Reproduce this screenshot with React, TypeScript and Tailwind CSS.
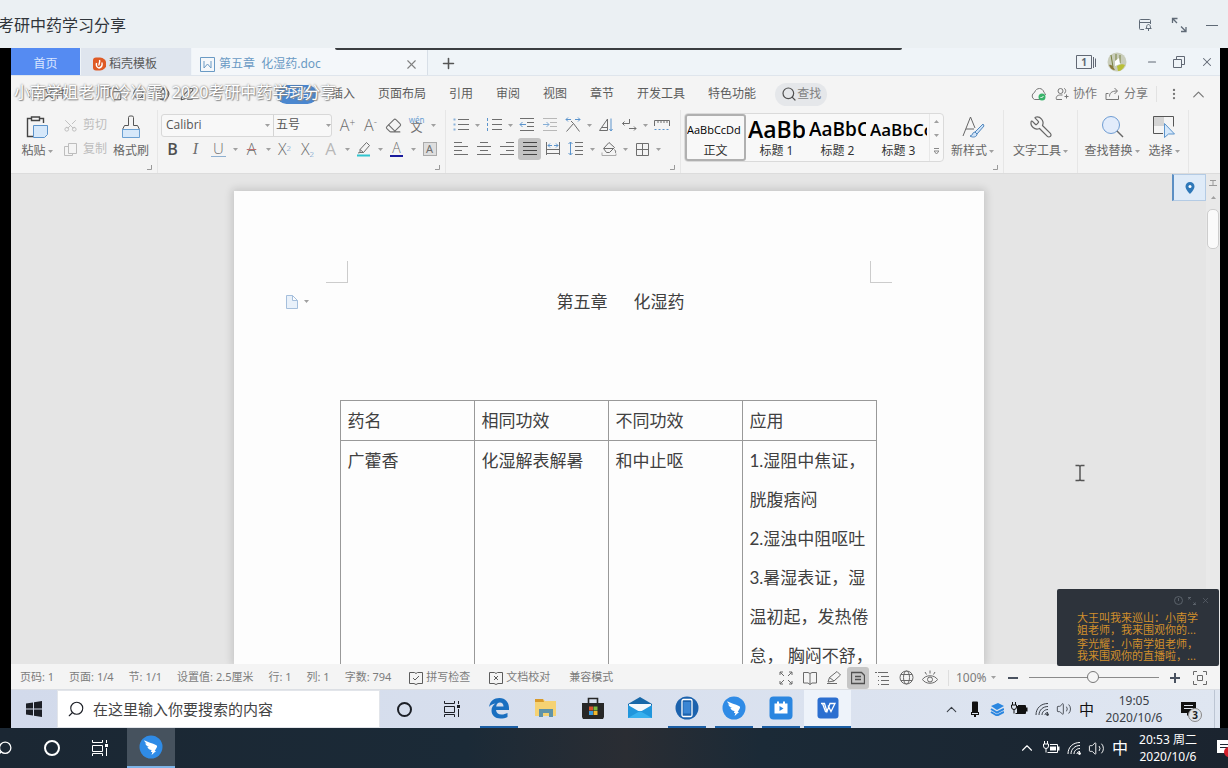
import { useState, type ReactNode } from "react";
import {
  ChevronUp,
  Copy,
  Eraser,
  Globe,
  List,
  Minus,
  MoreVertical,
  PenLine,
  Plus,
  Scissors,
  Search,
  Volume2,
  Wrench,
  X,
} from "lucide-react";

const MENUS = ["插入", "页面布局", "引用", "审阅", "视图", "章节", "开发工具", "特色功能"];

const STYLES = [
  { name: "正文", sample: "AaBbCcDd", cls: "text-[11px]" },
  { name: "标题 1", sample: "AaBb", cls: "text-[23px] font-semibold" },
  { name: "标题 2", sample: "AaBbC", cls: "text-[19px] font-semibold" },
  { name: "标题 3", sample: "AaBbCc", cls: "text-[17px] font-semibold" },
];

const USAGE_LINES = [
  "1.湿阻中焦证，",
  "胱腹痞闷",
  "2.湿浊中阻呕吐",
  "3.暑湿表证，湿",
  "温初起，发热倦",
  "怠， 胸闷不舒，",
];

function Svg({
  w = 16,
  h = 16,
  box,
  className = "",
  children,
}: {
  w?: number;
  h?: number;
  box?: string;
  className?: string;
  children: ReactNode;
}) {
  return (
    <svg
      width={w}
      height={h}
      viewBox={box ?? `0 0 ${w} ${h}`}
      fill="none"
      stroke="currentColor"
      strokeWidth={1}
      className={`shrink-0 ${className}`}
      aria-hidden="true"
    >
      {children}
    </svg>
  );
}

function Caret() {
  return (
    <Svg w={5} h={3} className="text-[#a0a0a0]">
      <path d="M0 0h5L2.5 3z" fill="currentColor" stroke="none" />
    </Svg>
  );
}

// Small ribbon button, optionally with its drop-down arrow
function Tool({
  label,
  caret,
  active,
  dim,
  children,
}: {
  label: string;
  caret?: boolean;
  active?: boolean;
  dim?: boolean;
  children: ReactNode;
}) {
  return (
    <button
      type="button"
      aria-label={label}
      className={`flex h-6 items-center ${dim ? "text-[#b8b8b8]" : "text-[#6e6e6e]"}`}
    >
      <span
        className={`flex h-[22px] w-[23px] items-center justify-center rounded-[3px] ${
          active ? "bg-[#c3c3c3] text-[#444]" : ""
        }`}
      >
        {children}
      </span>
      {caret && (
        <span className="flex w-[10px] justify-center">
          <Caret />
        </span>
      )}
    </button>
  );
}

// Large ribbon button: icon on top, caption below
function BigTool({
  label,
  caret,
  className,
  children,
}: {
  label: string;
  caret?: boolean;
  className: string;
  children: ReactNode;
}) {
  return (
    <button
      type="button"
      className={`flex shrink-0 flex-col items-center gap-1 pt-[2px] text-[#666] ${className}`}
    >
      <span className="flex h-6 items-center">{children}</span>
      <span className="flex items-center gap-[2px] whitespace-nowrap text-[12px] leading-4">
        {label}
        {caret && <Caret />}
      </span>
    </button>
  );
}

function Launcher() {
  return (
    <Svg w={5} h={5} className="absolute right-[5px] bottom-[3px] text-[#999]">
      <path d="M4.5 0v4.5H0" />
    </Svg>
  );
}

function Lines({ rows }: { rows: [number, number][] }) {
  return (
    <Svg>
      {rows.map(([a, b], i) => (
        <path key={i} d={`M${a} ${1.5 + i * 4}H${b}`} />
      ))}
    </Svg>
  );
}

function DingTalk({ size = 24 }: { size?: number }) {
  return (
    <Svg w={size} h={size} box="0 0 24 24">
      <circle cx="12" cy="12" r="11.5" fill="#2f8be6" stroke="none" />
      <path
        d="M5.2 5.2c3.5 2 8 2.700 12.200 5 .9.5.8 1.400.300 2.300l-2 3.400h1.400L12.600 20l.8-3.100h-1.500l.7-1.900c-2.300-.2-3.700-1.300-4.300-3.200l2 .2c-2.300-1.100-3.700-2-4-3.800l1.400.3C6.300 7.600 5.500 6.600 5.200 5.200z"
        fill="#fff"
        stroke="none"
      />
    </Svg>
  );
}

function TaskViewIcon() {
  return (
    <Svg w={18} h={16}>
      <path d="M1.500 0v2.500h10V0M1.500 5.500h10v6h-10zM1.500 16v-2.500h10V16M15.500 0v3M15.500 8v8" />
      <path d="M14 4h3v3h-3z" fill="currentColor" stroke="none" />
    </Svg>
  );
}

function WifiIcon() {
  return (
    <Svg w={14} h={14}>
      <path d="M1 13C1 6 6 1.500 13 1.500M4 13C4 8 8 4.500 13 4.500M7 13c0-3 2.500-5.500 6-5.500M10 13c0-1.500 1-2.500 3-2.500" />
      <circle cx="12.500" cy="12.500" r="1" fill="currentColor" />
    </Svg>
  );
}

function BatteryIcon({ filled }: { filled?: boolean }) {
  return (
    <Svg w={17} h={14} className={filled ? "text-[#111]" : ""}>
      <path d="M1.500 0v3M4.500 0v3M.500 3h5v2a2.500 2.500 0 0 1-5 0zM3 7.500v4" />
      <path d="M7 3.500h7.500v8H4.500" />
      <path d={filled ? "M6 4h8v7H6z" : "M7 5.500h6v4H7z"} fill="currentColor" stroke="none" />
      <path d="M15.500 5.500v4" strokeWidth={2} />
    </Svg>
  );
}

function TitleBar() {
  return (
    <header className="flex h-12 shrink-0 items-center justify-between overflow-hidden bg-[#ebf0f3] pt-[2px] pr-[10px]">
      <h1 className="-ml-[2px] whitespace-nowrap text-[16px] leading-6 text-[#30353a]">
        考研中药学习分享
      </h1>
      <div className="flex items-center gap-[19px] text-[#5f6a76]">
        <button type="button" aria-label="窗口置顶">
          <Svg w={14} h={14}>
            <path d="M6 11.500H2.500a1 1 0 0 1-1-1v-8a1 1 0 0 1 1-1h9a1 1 0 0 1 1 1V6M1.500 4.500h11" />
            <path d="M7.500 10.500h6M8.500 10.500c0-2.500.5-4 2-4s2 1.500 2 4M10.500 10.500V13" />
          </Svg>
        </button>
        <button type="button" aria-label="全屏">
          <Svg w={16} h={16}>
            <path d="M6.500 1.500H1.500V6M1.500 1.500L6 6M15 10v4.500h-5M10 9.500l5 5" strokeWidth={1.300} />
          </Svg>
        </button>
        <button type="button" aria-label="最小化" className="flex h-3 w-3 items-center">
          <span className="block h-px w-full bg-[#5f6a76]" />
        </button>
      </div>
    </header>
  );
}

function TabBar() {
  return (
    <div className="flex h-7 shrink-0 items-stretch border-b border-[#dfe5ec] bg-[#eff4f8] text-[12px]">
      <button type="button" className="w-[69px] bg-[#558bf2] pt-[5px] text-[#d9e6ff]">
        首页
      </button>
      <button
        type="button"
        className="ml-px flex w-[110px] items-center gap-[3px] bg-[#dfe5ee] pt-[5px] pl-[11px] text-[#5a5a5a]"
      >
        <Svg w={14} h={14}>
          <path d="M1 3.500C1 1.500 2 .5 4 .5h4a6.500 6.500 0 0 1 0 13H4c-2 0-3-1-3-3z" fill="#df5a25" stroke="none" />
          <path d="M7.500 3c1 2-1 3.500-.5 5.500M10 5.500c.5 3-1 5-3 5.500-2-.5-3-2.500-2.500-5" stroke="#fff" strokeWidth={1.400} />
        </Svg>
        稻壳模板
      </button>
      <div className="ml-px flex w-[236px] items-center justify-between border-r border-[#d8dfe7] bg-[#f4f7fa] pt-[5px] pr-[8px] pl-2">
        <button type="button" className="flex items-center gap-1 text-[#6a9ac4]">
          <Svg w={15} h={15}>
            <path d="M.500.500h14v14H.500zM4 4v7l3.500-4 3.500 4V4" />
          </Svg>
          <span className="whitespace-pre">第五章{"  "}化湿药.doc</span>
        </button>
        <button type="button" aria-label="关闭标签" className="text-[#808080]">
          <X size={15} strokeWidth={1.800} />
        </button>
      </div>
      <button type="button" aria-label="新建标签" className="ml-[12px] pt-[3px] text-[#555]">
        <Plus size={17} strokeWidth={2.200} />
      </button>
      <div className="ml-auto flex items-center gap-[15px] pt-[1px] pr-[6px] text-[#616874]">
        <div className="flex items-center gap-[10px]">
          <Svg w={21} h={14}>
            <path d="M.5.5h15v13H.5zM17.500 2v11M19.500 3.500V12" />
            <text x="8" y="11" fontSize="10" textAnchor="middle" fill="currentColor" stroke="none" fontWeight="bold">
              1
            </text>
          </Svg>
          <Svg w={20} h={20}>
            <circle cx="10" cy="10" r="9.500" fill="#c9cdbb" stroke="none" />
            <path d="M4 3l2 12M9 2v10M13 3v8" stroke="#77803e" />
            <path d="M2 13c3-1 4 2 6 5-3 0-5-2-6-5z" fill="#8a7a3c" stroke="none" />
            <path d="M10 14c4-2 6-2 8-1-2 4-4 6-7 6z" fill="#b9bf36" stroke="none" />
            <path d="M8 9l4-3 1 6-5 2z" fill="#fff" stroke="none" />
          </Svg>
        </div>
        <button type="button" aria-label="最小化窗口" className="ml-[4px]">
          <Minus size={12} strokeWidth={2.200} />
        </button>
        <button type="button" aria-label="还原窗口">
          <Svg w={12} h={12}>
            <path d="M.5 3.500h8v8h-8zM3.500 3.500v-3h8v8h-3" />
          </Svg>
        </button>
        <button type="button" aria-label="关闭窗口">
          <X size={14} strokeWidth={1.800} />
        </button>
      </div>
    </div>
  );
}

function MenuRow() {
  return (
    <div className="relative flex h-[34px] shrink-0 items-center pt-[2px] text-[12px] text-[#5c5c5c]">
      <button type="button" className="ml-[17px] flex w-20 items-center gap-[3px]">
        <List size={12} strokeWidth={1.500} />
        文件
      </button>
      <div className="flex flex-1 grow-0 basis-[169px] items-center gap-[10px] text-[#555]">
        <Copy size={14} strokeWidth={1.800} />
        <Search size={14} strokeWidth={1.800} />
        <Globe size={14} strokeWidth={1.800} />
        <PenLine size={14} strokeWidth={1.800} />
      </div>
      <button
        type="button"
        className="h-[19px] w-[40px] shrink-0 rounded-full bg-[#4b87cf] leading-[18px] text-white"
      >
        开始
      </button>
      <nav className="ml-[14px] flex shrink-0 gap-[23px]">
        {MENUS.map((m) => (
          <button key={m} type="button" className="whitespace-nowrap">
            {m}
          </button>
        ))}
      </nav>
      <button
        type="button"
        className="ml-[19px] flex h-[23px] shrink-0 items-center rounded-full bg-[#e5e7ea] px-[6px] text-[#808080]"
      >
        <Search size={16} strokeWidth={1.800} className="text-[#505050]" />
        查找
      </button>
      <div className="ml-auto flex shrink-0 items-center gap-[8px] pr-[12px] text-[#777]">
        <Svg w={17} h={14}>
          <path d="M10 12.500H4.500a3.800 3.800 0 0 1 0-7C5.500 2.500 7.500 1.500 9.500 1.500s4 1.500 4.500 4c1 .5 1.500 1.500 1.500 2.500" />
          <circle cx="12" cy="10" r="3.500" fill="#39b36a" stroke="none" />
          <path d="M10.500 10l1 1 2-2" stroke="#fff" />
        </Svg>
        <button type="button" className="flex items-center gap-1">
          <Svg w={14} h={14}>
            <circle cx="5.500" cy="4" r="2.500" />
            <path d="M7 12.500H1.500c-1-3 1-4.500 4-4.500h2M9.500 9.500h4M11.500 7.500v4M9 1.500c2 0 2.500 4 0 5" />
          </Svg>
          协作
        </button>
        <button type="button" className="flex items-center gap-1">
          <Svg w={15} h={14}>
            <path d="M3.500 6.500H1v6h12.500v-4M4.500 9.500c0-3.500 2-5.500 7.500-5.500M9.500 1l3 3-3 3" />
          </Svg>
          分享
        </button>
        <span className="h-4 w-px bg-[#e2e2e2]" />
        <button type="button" aria-label="更多" className="ml-[2px]">
          <MoreVertical size={14} />
        </button>
        <button type="button" aria-label="收起功能区">
          <ChevronUp size={19} strokeWidth={1.500} />
        </button>
      </div>
      {/* stream title drawn over the shared screen */}
      <p className="pointer-events-none absolute top-[4px] left-[3px] whitespace-nowrap text-[16px] leading-6 text-white [text-shadow:0_0_2px_#666,1px_1px_1px_#999]">
        小南学姐老师(冷冶霏) 2020考研中药学习分享
      </p>
    </div>
  );
}

function Ribbon() {
  const [font, setFont] = useState("Calibri");
  const [size, setSize] = useState("五号");
  const group = "relative flex shrink-0 pt-[3px]";
  const divider = "border-l border-[#e6e6e6]";
  const letter = "font-[Open_Sans] text-[16px] leading-5 font-light";

  return (
    <div className="flex h-16 shrink-0 overflow-hidden border-b border-[#dcdcdc] text-[12px] text-[#666]">
      <div className={`${group} w-[146px]`}>
        <BigTool label="粘贴" caret className="w-[52px]">
          <Svg w={22} h={22}>
            <path d="M7 20.500H1.500V2.500H5M14 2.500h3.500V7" stroke="#444" strokeWidth={1.400} />
            <path d="M5.500 1h8v3.500h-8z" stroke="#444" strokeWidth={1.400} />
            <path d="M7.500 9.500h14v9l-3 3h-11z" fill="#d6e8fa" stroke="#5c94cc" />
          </Svg>
        </BigTool>
        <div className="flex w-[50px] flex-col text-[#bdbdbd]">
          <button type="button" className="flex h-6 items-center gap-[5px] whitespace-nowrap">
            <Scissors size={15} strokeWidth={1.500} className="-rotate-90" />
            剪切
          </button>
          <button type="button" className="flex h-6 items-center gap-[5px] whitespace-nowrap">
            <Svg w={15} h={15}>
              <path d="M5.500 1.500h8v10h-8zM5.500 4.500h-4v9h8v-2" />
            </Svg>
            复制
          </button>
        </div>
        <BigTool label="格式刷" className="w-[36px]">
          <Svg w={20} h={24}>
            <path d="M7.500 10.500v-8a1.500 1.500 0 0 1 1.500-1.500h2a1.500 1.500 0 0 1 1.500 1.500v8h4l2 4h-17l2-4z" stroke="#555" />
            <path d="M1.500 14.500h17v8h-17z" fill="#d6e8fa" stroke="#6ba0d2" />
          </Svg>
        </BigTool>
        <Launcher />
      </div>

      <div className={`${group} ${divider} w-[288px] flex-col pl-[3px]`}>
        <div className="flex h-6 items-center">
          <div className="mr-[4px] flex h-[23px] w-[171px] items-center rounded-[3px] border border-[#d8d8d8] bg-[#f8f8f8] text-[#555]">
            <select
              aria-label="字体"
              value={font}
              onChange={(e) => setFont(e.target.value)}
              className="h-full flex-1 appearance-none pl-1 font-[Open_Sans] text-[12px] outline-none"
            >
              <option>Calibri</option>
              <option>Arial</option>
            </select>
            <Caret />
            <span className="ml-[3px] h-full w-px bg-[#d4d4d4]" />
            <select
              aria-label="字号"
              value={size}
              onChange={(e) => setSize(e.target.value)}
              className="h-full w-[52px] appearance-none pl-[2px] text-[12px] outline-none"
            >
              <option>五号</option>
              <option>四号</option>
            </select>
            <Caret />
          </div>
          <Tool label="增大字号">
            <span className={letter}>
              A<sup className="text-[10px]">+</sup>
            </span>
          </Tool>
          <Tool label="减小字号">
            <span className={letter}>
              A<sup className="text-[10px]">-</sup>
            </span>
          </Tool>
          <Tool label="清除格式">
            <Eraser size={17} strokeWidth={1.500} />
          </Tool>
          <Tool label="拼音指南" caret>
            <span className="flex flex-col items-center text-[12px] leading-[11px]">
              <span className="h-[5px] text-[8px] leading-[5px] text-[#6ba0d2]">wén</span>
              文
            </span>
          </Tool>
        </div>
        <div className="flex h-6">
          <Tool label="加粗">
            <b className="font-[Open_Sans] text-[16px] leading-5 font-semibold text-[#505050]">B</b>
          </Tool>
          <Tool label="倾斜">
            <i className="font-[Liberation_Serif] text-[16px] leading-5">I</i>
          </Tool>
          <Tool label="下划线" caret>
            <span className="border-b border-[#8fb0d0] px-[2px] font-[Open_Sans] text-[15px] leading-[15px] font-light">
              U
            </span>
          </Tool>
          <Tool label="删除线" caret>
            <span className="font-[Open_Sans] text-[16px] leading-5 font-light line-through decoration-[#c27070] decoration-1">
              A
            </span>
          </Tool>
          <Tool label="上标">
            <span className={letter}>
              X<sup className="text-[8px] text-[#4f86bd]">2</sup>
            </span>
          </Tool>
          <Tool label="下标">
            <span className={letter}>
              X<sub className="text-[8px] text-[#4f86bd]">2</sub>
            </span>
          </Tool>
          <Tool label="文字效果" caret dim>
            <span className="font-[Open_Sans] text-[17px] leading-5">A</span>
          </Tool>
          <Tool label="突出显示" caret>
            <Svg>
              <path d="M4 8.500l6.500-7 3 3L7.500 11.500H4zM4 8.500l3.500 3M2 12l2-.5" />
              <path d="M1 14.500h13" stroke="#31c5cf" strokeWidth={2} />
            </Svg>
          </Tool>
          <Tool label="字体颜色" caret>
            <span className="border-b-2 border-[#1a1a9c] px-[2px] font-[Open_Sans] text-[14px] leading-[14px] font-light">
              A
            </span>
          </Tool>
          <Tool label="字符底纹">
            <span className="h-[14px] w-[14px] border border-[#aaa] bg-[#dedede] text-center text-[11px] leading-3">
              A
            </span>
          </Tool>
        </div>
        <Launcher />
      </div>

      <div className={`${group} ${divider} w-[235px] flex-col pl-[3px]`}>
        <div className="flex h-6">
          <Tool label="项目符号" caret>
            <Svg>
              <path d="M5 2.500h11M5 7.500h11M5 12.500h11" />
              <path d="M.5 2.500h2M.5 7.500h2M.5 12.500h2" stroke="#8ab2da" strokeWidth={2} />
            </Svg>
          </Tool>
          <Tool label="编号" caret>
            <Svg>
              <path d="M6 2.500h10M6 7.500h10M6 12.500h10" />
              <path d="M1.500 1v3M1.500 6v3M1.500 11v3" stroke="#5c94cc" />
            </Svg>
          </Tool>
          <Tool label="减少缩进">
            <Svg>
              <path d="M1 1.500h14M8 5.500h7M8 9.500h7M1 13.500h14" />
              <path d="M7 7.500H1M3.500 5L1 7.500 3.500 10" stroke="#5c94cc" />
            </Svg>
          </Tool>
          <Tool label="增加缩进" dim>
            <Svg>
              <path d="M1 1.500h14M8 5.500h7M8 9.500h7M1 13.500h14" />
              <path d="M1 7.500h6M4.500 5L7 7.500 4.500 10" stroke="#86aed6" />
            </Svg>
          </Tool>
          <Tool label="中文版式" caret>
            <Svg>
              <path d="M1.500 14.500L8.500 6.500l6 8M8.500 6.500L6 4" />
              <path d="M1 2.500h5M10 2.500h5M3 .5l-2 2 2 2M13 .5l2 2-2 2" stroke="#5c94cc" />
            </Svg>
          </Tool>
          <Tool label="排序">
            <Svg>
              <path d="M1.500 13.500L9.500 2v11.500zM4 10.500h5" />
              <path d="M13 1.500v12M11.500 12l1.500 2 1.500-2" stroke="#5c94cc" />
            </Svg>
          </Tool>
          <Tool label="换行标记" caret>
            <Svg>
              <path d="M8.500 2v4.500h-7M3.500 4.500l-2 2 2 2M8 11.500h7M13 9.500l2 2-2 2" />
            </Svg>
          </Tool>
          <Tool label="标尺">
            <Svg>
              <path d="M.500 9V3.500h15V9M4 4v2M7 4v2M10 4v2M13 4v2" />
              <path d="M.500 12.500h15" stroke="#5c94cc" strokeDasharray="2 2" />
            </Svg>
          </Tool>
        </div>
        <div className="flex h-6">
          <Tool label="左对齐">
            <Lines rows={[[1, 9], [1, 15], [1, 9], [1, 15]]} />
          </Tool>
          <Tool label="居中对齐">
            <Lines rows={[[4, 12], [1, 15], [4, 12], [1, 15]]} />
          </Tool>
          <Tool label="右对齐">
            <Lines rows={[[7, 15], [1, 15], [7, 15], [1, 15]]} />
          </Tool>
          <Tool label="两端对齐" active>
            <Lines rows={[[1, 15], [1, 15], [1, 15], [1, 15]]} />
          </Tool>
          <Tool label="分散对齐">
            <Svg>
              <path d="M1.500 1v13M14.500 1v13M2 8.500h12M2 12.500h12" />
              <path d="M3 4.500h4M9 4.500h4M5 2.500l-2 2 2 2M11 2.500l2 2-2 2" stroke="#5c94cc" />
            </Svg>
          </Tool>
          <Tool label="行距" caret>
            <Svg>
              <path d="M7 1.500h8M7 5.500h8M7 9.500h8M7 13.500h8" />
              <path d="M2.500 1v13M.500 3l2-2 2 2M.500 12l2 2 2-2" stroke="#5c94cc" />
            </Svg>
          </Tool>
          <Tool label="底纹颜色" caret>
            <Svg>
              <path d="M2.500 7.500L8 1.500l5.500 5-5 5H5.500zM3 7.500h9M13.500 8.500c1.500 2 1.500 3 .5 3.500" />
              <path d="M1 11.500v3h14v-2" stroke="#aaa" />
            </Svg>
          </Tool>
          <Tool label="边框" caret>
            <Svg>
              <path d="M2.500 2.500h12v12h-12zM8.500 3v11M3 8.500h11" />
            </Svg>
          </Tool>
        </div>
        <Launcher />
      </div>

      <div className={`${group} ${divider} w-[323px] pl-[3px]`}>
        <div className="flex h-[49px] w-[260px] rounded-[4px] border border-[#dadada] bg-[#f8f8f8]">
          {STYLES.map((s, i) => (
            <button
              key={s.name}
              type="button"
              className={`flex h-[47px] w-[61px] flex-col items-center overflow-hidden rounded-[3px] border-2 text-black ${
                i === 0 ? "border-[#b0b0b0]" : "border-transparent"
              }`}
            >
              <span
                className={`flex h-[27px] w-full items-center overflow-hidden font-[Open_Sans] leading-[27px] whitespace-nowrap ${s.cls}`}
              >
                {s.sample}
              </span>
              <span className="text-[12px] leading-[15px] text-[#333]">{s.name}</span>
            </button>
          ))}
          <div className="flex flex-1 flex-col items-center justify-around border-l border-[#e8e8e8]">
            <span className="rotate-180">
              <Caret />
            </span>
            <Caret />
            <Svg w={5} h={7} className="text-[#888]">
              <path d="M0 .5h5M0 3h5L2.500 6z" />
            </Svg>
          </div>
        </div>
        <BigTool label="新样式" caret className="w-[57px]">
          <Svg w={24} h={24}>
            <path d="M2 21L9.500 2 14 13M5 14h8" />
            <path d="M22 9l-8 8 2 2 7-8zM14 17c-3 0-2 4-5 4 3 2 7 1 7-2z" fill="#cfe3f8" stroke="#4f86bd" />
          </Svg>
        </BigTool>
        <Launcher />
      </div>

      <div className={`${group} ${divider} w-[74px] justify-center`}>
        <BigTool label="文字工具" caret className="w-[72px]">
          <Wrench size={24} strokeWidth={1.200} className="-scale-x-100" />
        </BigTool>
      </div>

      <div className={`${group} ${divider} w-[112px] border-r`}>
        <BigTool label="查找替换" caret className="w-[68px]">
          <Svg w={24} h={24}>
            <circle cx="11" cy="10" r="8.500" fill="#e2ecfb" stroke="#6f9dd3" />
            <path d="M17 16l6 6" stroke="#666" strokeWidth={1.400} />
          </Svg>
        </BigTool>
        <BigTool label="选择" caret className="w-[36px]">
          <Svg w={24} h={24}>
            <path d="M2 2h10v9H2z" fill="#d4d4d4" stroke="none" />
            <path d="M11 18.500H1.500v-17h20v10" stroke="#555" />
            <path d="M12.500 8.500v14l4-3.500h6z" fill="#d6e8fa" stroke="#5c94cc" />
          </Svg>
        </BigTool>
      </div>
    </div>
  );
}

function DocumentArea() {
  const cell = "h-10 border border-[#999] px-[7px] text-left align-top font-normal leading-[39px]";
  return (
    <main className="relative flex min-h-0 flex-1 overflow-hidden bg-[#e5e5e5]">
      <div className="flex min-w-0 flex-1 justify-center pt-[17px]">
        <article className="w-[750px] bg-[#fdfdfd] font-[Lato,Noto_Sans_CJK_SC,sans-serif] text-[17px] text-[#404040] shadow-[0_0_8px_2px_rgba(0,0,0,0.14)]">
          <div className="flex h-[92px] items-end justify-between px-[92px]">
            <span className="h-[22px] w-[22px] border-r border-b border-[#ccc]" />
            <span className="h-[22px] w-[22px] border-b border-l border-[#ccc]" />
          </div>
          <div className="flex h-[37px] items-center">
            <button type="button" aria-label="段落选项" className="ml-[52px] flex w-[24px] items-center gap-[6px]">
              <Svg w={12} h={14} className="text-[#a5bfdc]">
                <path d="M.500.500h6l5 5v8H.500zM6.500.500v5h5" fill="#e9f1fa" />
              </Svg>
              <Caret />
            </button>
            <h2 className="flex-1 pr-[52px] text-center whitespace-pre">第五章{"      "}化湿药</h2>
          </div>
          <table className="mt-[80px] ml-[106px] w-[537px] table-fixed border-collapse">
            <thead>
              <tr>
                <th className={cell}>药名</th>
                <th className={cell}>相同功效</th>
                <th className={cell}>不同功效</th>
                <th className={cell}>应用</th>
              </tr>
            </thead>
            <tbody>
              <tr>
                <td className={cell}>广藿香</td>
                <td className={cell}>化湿解表解暑</td>
                <td className={cell}>和中止呕</td>
                <td className={cell}>
                  {USAGE_LINES.map((line) => (
                    <p key={line} className="whitespace-nowrap">
                      {line}
                    </p>
                  ))}
                </td>
              </tr>
            </tbody>
          </table>
        </article>
      </div>
      <div className="flex w-[14px] shrink-0 flex-col items-center bg-[#e9e9e9] pt-[5px] text-[#999]">
        <Svg w={8} h={8}>
          <path d="M1 1.500h6M4 2v4M0 6.500h8" />
        </Svg>
        <span className="mt-[9px] mb-[10px] rotate-180">
          <Caret />
        </span>
        <span className="h-10 w-3 rounded-[5px] border border-[#cdcdcd] bg-[#fafafa]" />
      </div>
      <button
        type="button"
        aria-label="导航"
        className="absolute top-0 right-[14px] flex h-[27px] w-[34px] items-center justify-center border border-l-2 border-[#b4cbe4] border-l-[#5b8fc4] bg-[#dfebf8]"
      >
        <Svg w={10} h={12}>
          <path d="M5 0a4.500 4.500 0 0 1 4.500 4.500C9.500 7.500 5 12 5 12S.5 7.500.5 4.500A4.500 4.500 0 0 1 5 0z" fill="#2f78b8" stroke="none" />
          <circle cx="5" cy="4.500" r="1.500" fill="#fff" stroke="none" />
        </Svg>
      </button>
      {/* text cursor */}
      <Svg w={10} h={18} className="absolute top-[290px] right-[135px] text-[#555]">
        <path d="M.5 1.500h3.500l1 1 1-1h3.500M5 2v14M.5 16.500h3.500l1-1 1 1h3.500" strokeWidth={1.500} />
      </Svg>
    </main>
  );
}

function StatusBar() {
  const [zoom, setZoom] = useState(49);
  const view = "flex h-[22px] w-[22px] items-center justify-center";
  return (
    <footer className="flex h-[26px] shrink-0 items-center justify-between border-b border-[#dcdfe4] bg-[#f4f4f4] pt-[2px] pr-[13px] pl-[9px] text-[11px] whitespace-nowrap text-[#7c7c7c]">
      <div className="flex items-center gap-[18px]">
        <div className="flex items-center gap-[15px]">
          <span>页码: 1</span>
          <span>页面: 1/4</span>
          <span>节: 1/1</span>
          <span>设置值: 2.5厘米</span>
          <span>行: 1</span>
          <span>列: 1</span>
          <span>字数: 794</span>
        </div>
        <div className="flex items-center gap-[19px]">
          <button type="button" className="flex items-center gap-[3px]">
            <Svg w={14} h={14} className="text-[#5c5c5c]">
              <path d="M.5 1.500h5l1.500 1 1.500-1h5v11H9l-2 1-2-1H.500zM4 7l2 2 4-4" />
            </Svg>
            拼写检查
          </button>
          <button type="button" className="flex items-center gap-[3px]">
            <Svg w={14} h={14} className="text-[#5c5c5c]">
              <path d="M.5 1.500h5l1.500 1 1.500-1h5v11H9l-2 1-2-1H.500zM5 5l4 4M9 5L5 9" />
            </Svg>
            文档校对
          </button>
          <span>兼容模式</span>
        </div>
      </div>
      <div className="flex items-center text-[#6a6a6a]">
        <div className="flex items-center gap-[2px]">
          <button type="button" aria-label="全屏显示" className={view}>
            <Svg w={14} h={14}>
              <path d="M1 4V1h3M1 1l4 4M10 1h3v3M13 1L9 5M1 10v3h3M1 13l4-4M13 10v3h-3M13 13L9 9" />
            </Svg>
          </button>
          <button type="button" aria-label="阅读版式" className={view}>
            <Svg w={16} h={14}>
              <path d="M1.500 1.500h4.500l2 1 2-1h4.500v10.500H10l-2 1.500-2-1.500H1.500zM8 2.500v11" />
            </Svg>
          </button>
          <button type="button" aria-label="写作模式" className={view}>
            <Svg w={16} h={15}>
              <path d="M2 12l1.500-4.500L11 1.500l3.500 3.500-6.500 6zM3.500 7.500L8 11M1 13.500h10" />
            </Svg>
          </button>
          <button type="button" aria-label="页面视图" className={`${view} rounded-[3px] bg-[#c6c6c6]`}>
            <Svg w={14} h={14} className="text-[#505050]">
              <path d="M.500 1.500h10l3 3v8H.500zM4 5.500h6M4 8.500h6" strokeWidth={1.300} />
            </Svg>
          </button>
          <button type="button" aria-label="大纲" className={view}>
            <Svg w={14} h={14}>
              <path d="M0 1.500h2M3 1.500h10M3 5.500h1M6 5.500h8M3 9.500h1M6 9.500h8M3 13.500h1M6 13.500h8" />
            </Svg>
          </button>
          <button type="button" aria-label="Web版式" className={view}>
            <Svg w={15} h={15}>
              <circle cx="7.500" cy="7.500" r="6.500" />
              <ellipse cx="7.500" cy="7.500" rx="3" ry="6.500" />
              <path d="M2 4.500h11M2 10.500h11" />
            </Svg>
          </button>
          <button type="button" aria-label="护眼模式" className={view}>
            <Svg w={16} h={16}>
              <path d="M.5 9.500c3-5 12-5 15 0-3 5-12 5-15 0zM8 .5v3M3 2l1.500 2.500M13 2l-1.500 2.500" />
              <circle cx="8" cy="9.500" r="2.500" />
            </Svg>
          </button>
        </div>
        <span className="mx-[7px] h-4 w-px bg-[#dedede]" />
        <button type="button" className="flex w-[52px] items-center gap-1 text-[12px] text-[#7c7c7c]">
          100%
          <Caret />
        </button>
        <button type="button" aria-label="缩小">
          <span className="block h-[2px] w-[10px] bg-[#4a5260]" />
        </button>
        <input
          type="range"
          aria-label="显示比例"
          min={0}
          max={100}
          value={zoom}
          onChange={(e) => setZoom(Number(e.target.value))}
          className="mx-[11px] h-3 w-[130px] appearance-none bg-transparent [&::-webkit-slider-runnable-track]:h-px [&::-webkit-slider-runnable-track]:bg-[#8a8a8a] [&::-webkit-slider-thumb]:-mt-[6px] [&::-webkit-slider-thumb]:h-3 [&::-webkit-slider-thumb]:w-3 [&::-webkit-slider-thumb]:appearance-none [&::-webkit-slider-thumb]:rounded-full [&::-webkit-slider-thumb]:border [&::-webkit-slider-thumb]:border-[#777] [&::-webkit-slider-thumb]:bg-[#f6f6f6]"
        />
        <button type="button" aria-label="放大" className="text-[#4a5260]">
          <Svg w={10} h={10}>
            <path d="M0 5h10M5 0v10" strokeWidth={2} />
          </Svg>
        </button>
        <button type="button" aria-label="最佳显示比例" className="ml-[13px]">
          <Svg w={14} h={14}>
            <path d="M.5 4V.5H4M10 .5h3.500V4M13.500 10v3.500H10M4 13.500H.5V10M4.500 4.500h5v5h-5z" />
          </Svg>
        </button>
      </div>
    </footer>
  );
}

const APPS: { name: string; running?: boolean; active?: boolean; icon: ReactNode }[] = [
  {
    name: "Edge",
    running: true,
    icon: (
      <Svg w={22} h={22}>
        <path
          d="M1 10C2 4 6 1 11.500 1 17.500 1 21 5.500 21 11v2H8c.3 3 2.500 4.500 5.500 4.500 2.300 0 4.300-.6 6-1.500v4c-2 1-4.500 1.500-7 1.500C7 21.500 3.500 18 3.500 13.500c0-3 1.500-5.500 4-7C4.500 7 2.300 8.300 1 10zM8.200 9.500h7.300C15.500 7 14 5.500 12 5.500S8.500 7 8.200 9.500z"
          fill="#1a6fc0"
          fillRule="evenodd"
          stroke="none"
        />
      </Svg>
    ),
  },
  {
    name: "文件资源管理器",
    icon: (
      <Svg w={23} h={20}>
        <path d="M1 1h8l2 2h11v15H1z" fill="#f5d273" stroke="none" />
        <path d="M1 1h8l1 3H1z" fill="#d99a2b" stroke="none" />
        <path d="M5 19v-8h14v8h-4v-4H9v4z" fill="#5f93a8" stroke="none" />
      </Svg>
    ),
  },
  {
    name: "Microsoft Store",
    icon: (
      <Svg w={24} h={24}>
        <path d="M1 7h22v14l-1 2H2l-1-2z" fill="#272727" stroke="none" />
        <path d="M7.500 7V2.500h9V7" stroke="#272727" strokeWidth={1.600} />
        <path d="M8 10.500h4v4H8z" fill="#d9512c" stroke="none" />
        <path d="M12.500 10.500h4v4h-4z" fill="#7db93c" stroke="none" />
        <path d="M8 15h4v4H8z" fill="#3a9bdc" stroke="none" />
        <path d="M12.500 15h4v4h-4z" fill="#f2b92f" stroke="none" />
      </Svg>
    ),
  },
  {
    name: "邮件",
    icon: (
      <Svg w={24} h={22}>
        <path d="M0 7l12-7 12 7v14H0z" fill="#1767a8" stroke="none" />
        <path d="M1 7h22v7H1z" fill="#f4f8fc" stroke="none" />
        <path d="M0 8l12 7 12-7v13H0z" fill="#2196dc" stroke="none" />
        <path d="M0 21l12-7 12 7z" fill="#38b0ee" stroke="none" />
      </Svg>
    ),
  },
  {
    name: "手机投屏",
    running: true,
    icon: (
      <Svg w={24} h={24}>
        <circle cx="12" cy="12" r="11.500" fill="#1c62ad" stroke="none" />
        <rect x="7" y="3.500" width="10" height="17" rx="1.500" stroke="#fff" strokeWidth={1.300} />
        <path d="M8.500 6h7v11.500h-7z" fill="#3b86d4" stroke="none" />
      </Svg>
    ),
  },
  { name: "钉钉", running: true, icon: <DingTalk /> },
  {
    name: "直播助手",
    running: true,
    icon: (
      <Svg w={24} h={24}>
        <rect x="0.500" y="0.500" width="23" height="23" rx="4" fill="#2a86e0" stroke="none" />
        <path d="M5.500 7.500h13v10h-13zM8 5.500h2v2H8zM14 5.500h2v2h-2z" fill="#fff" stroke="none" />
        <path d="M10.500 10l4 2.500-4 2.500z" fill="#2a86e0" stroke="none" />
      </Svg>
    ),
  },
  {
    name: "WPS",
    running: true,
    active: true,
    icon: (
      <Svg w={22} h={22}>
        <rect x="0.500" y="0.500" width="21" height="21" rx="3" fill="#2c6fd0" stroke="none" />
        <path d="M4 6.500h3.500l2.500 8 3-8h5l-4 8-3-6M5.500 6.500l3 8h1.500" stroke="#fff" strokeWidth={1.300} />
      </Svg>
    ),
  },
];

function SharedTaskbar() {
  return (
    <div className="flex h-[38px] shrink-0 items-stretch bg-linear-to-r from-[#d2daeb] to-[#dfe6f1] text-[#1c1f26]">
      <button type="button" aria-label="开始菜单" className="flex w-[46px] items-center justify-center">
        <Svg w={16} h={16}>
          <path d="M0 2.500L7 1.500v6H0zM8 1.300L16 0v7.500H8zM0 8.500h7v6l-7-1zM8 8.500h8V16l-8-1.300z" fill="currentColor" stroke="none" />
        </Svg>
      </button>
      <label className="flex w-[323px] items-center gap-2 border border-[#e2e5ea] bg-white pl-[9px]">
        <Search size={18} strokeWidth={1.500} className="-scale-x-100" />
        <input
          aria-label="搜索"
          placeholder="在这里输入你要搜索的内容"
          className="min-w-0 flex-1 text-[15px] outline-none placeholder:text-[#444]"
        />
      </label>
      <div className="flex flex-1 pl-px">
        <button type="button" aria-label="Cortana" className="flex w-[47px] items-center justify-center">
          <span className="h-[15px] w-[15px] rounded-full border-2 border-current" />
        </button>
        <button type="button" aria-label="任务视图" className="flex w-[47px] items-center justify-center">
          <TaskViewIcon />
        </button>
        {APPS.map((app) => (
          <button
            key={app.name}
            type="button"
            aria-label={app.name}
            className={`flex w-[47px] flex-col items-center ${app.active ? "bg-[#eef3fa]" : ""}`}
          >
            <span className="flex flex-1 items-center">{app.icon}</span>
            <span
              className={`h-[2px] ${app.active ? "w-full" : "w-[38px]"} ${app.running ? "bg-[#1c5fa5]" : ""}`}
            />
          </button>
        ))}
      </div>
      <div className="flex items-center gap-[7px] text-[#3a3f47]">
        <ChevronUp size={17} strokeWidth={1.500} />
        <Svg w={16} h={16} className="text-[#111]">
          <path d="M5 1.500a1 1 0 0 1 1-1h4a1 1 0 0 1 1 1V12H5zM4 11h1v2h6v-2h1v3H4zM7 14h2v2H7z" fill="currentColor" stroke="none" />
        </Svg>
        <Svg w={14} h={14}>
          <path d="M1 4l7-3 6 3-7 4z" fill="#2a86e0" stroke="none" />
          <path d="M1 7l6 3.500L14 7M1 10l6 3.500 7-3.500" stroke="#2a86e0" strokeWidth={2} />
        </Svg>
        <BatteryIcon filled />
        <WifiIcon />
        <Volume2 size={16} strokeWidth={1.300} />
        <span className="text-[15px] leading-5 text-[#111]">中</span>
        <time className="w-[66px] text-center text-[12px] leading-[17px]">
          19:05
          <br />
          2020/10/6
        </time>
      </div>
      <button type="button" aria-label="通知" className="relative mr-[5px] ml-[13px] flex w-[35px] items-center border-r border-[#bcc5d3]">
        <Svg w={17} h={16}>
          <path d="M1 1h15v11h-6l-3 3v-3H1z" fill="#111" stroke="none" />
          <path d="M4 4.500h9M4 7.500h9" stroke="#dfe6f1" />
        </Svg>
        <span className="absolute top-[18px] left-[8px] h-[14px] w-[14px] rounded-full border border-[#888] bg-[#dfe3ea] text-center text-[10px] leading-3 font-bold">
          3
        </span>
      </button>
    </div>
  );
}

function ChatPopup() {
  return (
    <aside className="absolute right-[9px] bottom-[62px] h-[77px] w-[162px] rounded-[2px] bg-[#2d333b] text-[11px] leading-3 whitespace-nowrap text-[#d08f2c]">
      <div className="flex h-[23px] items-center justify-end gap-[5px] pr-[9px] text-[#5b626b]">
        <Svg w={9} h={9}>
          <circle cx="4.500" cy="4.500" r="4" />
          <path d="M4.500 2v3" />
        </Svg>
        <Svg w={8} h={8}>
          <path d="M0 3V.5h3M.5.5l2 2M8 5v2.500H5M7.500 7.500l-2-2" />
        </Svg>
        <X size={9} />
      </div>
      <p className="pl-5">
        大王叫我来巡山：小南学
        <br />
        姐老师，我来围观你的...
      </p>
      <p className="mt-[2px] pl-5">
        李光耀：小南学姐老师，
        <br />
        我来围观你的直播啦，...
      </p>
    </aside>
  );
}

function Taskbar() {
  return (
    <div className="flex h-10 shrink-0 items-stretch overflow-hidden bg-[linear-gradient(90deg,#1b2733_0%,#1b2a37_38%,#2a2d33_51%,#1b2a37_62%,#1b242f_100%)] text-white">
      <button type="button" aria-label="搜索" className="flex w-[28px] items-center">
        <Search size={17} strokeWidth={1.800} className="-ml-1 -scale-x-100" />
      </button>
      <button type="button" aria-label="Cortana" className="flex w-[48px] items-center justify-center">
        <span className="h-4 w-4 rounded-full border-2 border-white" />
      </button>
      <button type="button" aria-label="任务视图" className="flex w-[48px] items-center justify-center">
        <TaskViewIcon />
      </button>
      <button
        type="button"
        aria-label="钉钉"
        className="ml-[3px] flex w-[48px] items-center justify-center border-b-2 border-[#7db4e8] bg-[#46525e]"
      >
        <DingTalk size={24} />
      </button>
      <div className="ml-auto flex items-center gap-[7px]">
        <ChevronUp size={18} strokeWidth={1.500} />
        <BatteryIcon />
        <WifiIcon />
        <Volume2 size={17} strokeWidth={1.300} />
        <span className="text-[16px] leading-5">中</span>
        <time className="w-[66px] text-center text-[12px] leading-[17px]">
          20:53 周二
          <br />
          2020/10/6
        </time>
      </div>
      <button type="button" aria-label="通知" className="ml-[15px] flex w-[12px] items-center">
        <Svg w={12} h={18}>
          <path d="M1 1h11v13H1z" fill="#fff" stroke="none" />
          <path d="M4 5.500h8M4 8.500h8" stroke="#1b2733" />
          <circle cx="13" cy="13" r="5" fill="#d3202c" stroke="none" />
        </Svg>
      </button>
    </div>
  );
}

export default function App() {
  return (
    <div className="flex h-screen flex-col overflow-hidden bg-black font-[Noto_Sans,Noto_Sans_CJK_SC,sans-serif]">
      <TitleBar />
      <div className="relative flex min-h-0 flex-1 flex-col pr-2 pl-[11px]">
        <div className="flex min-h-0 flex-1 flex-col bg-[#f4f4f4]">
          <TabBar />
          <MenuRow />
          <Ribbon />
          <DocumentArea />
          <StatusBar />
          <SharedTaskbar />
        </div>
        {/* collapsed broadcast toolbar on the top edge */}
        <span className="absolute top-0 left-[335px] h-[2px] w-[567px] rounded-b bg-[#3a3d40]" />
        <ChatPopup />
      </div>
      <Taskbar />
    </div>
  );
}
